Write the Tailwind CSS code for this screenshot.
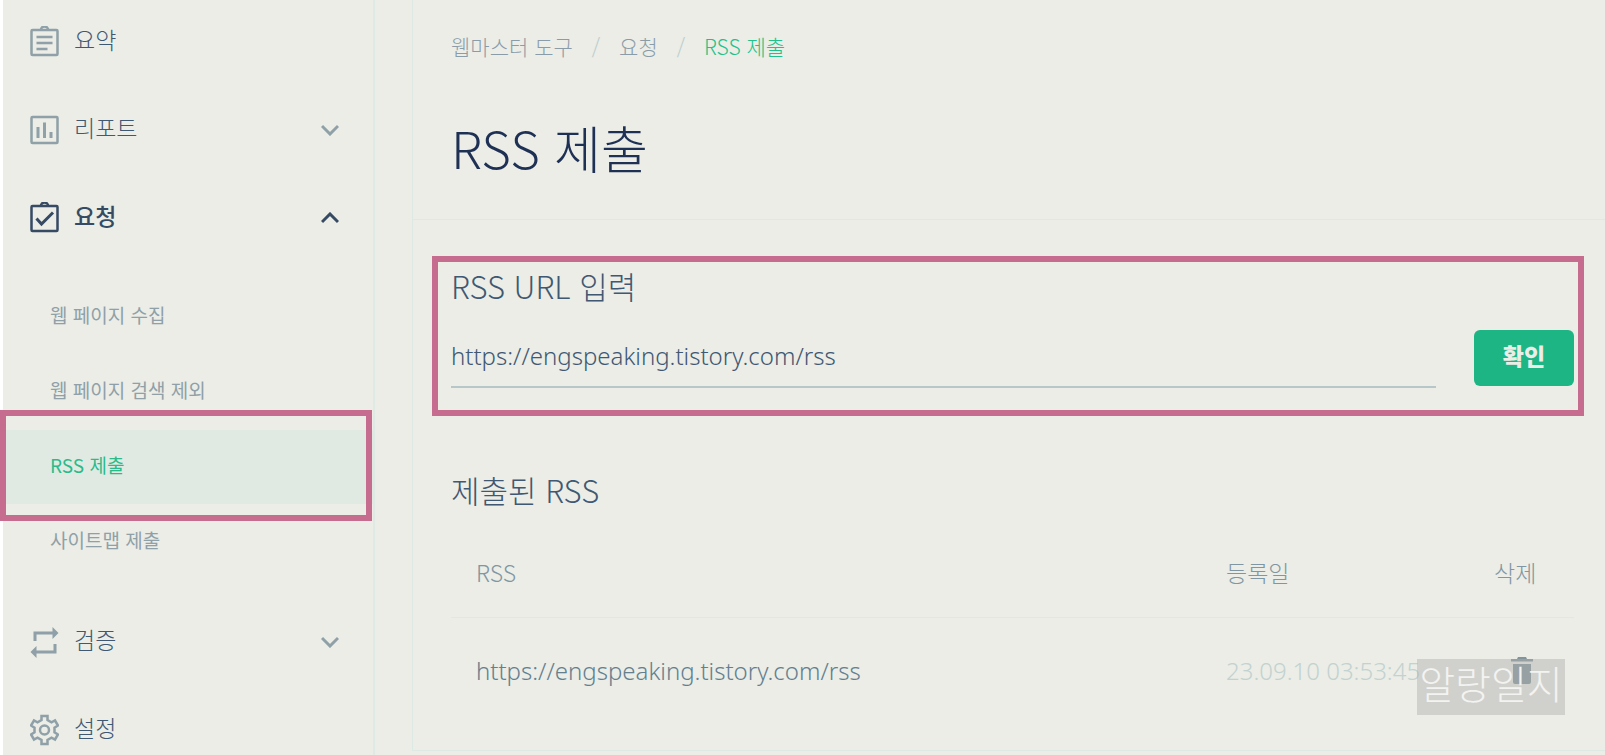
<!DOCTYPE html>
<html lang="ko">
<head>
    <meta charset="UTF-8">
    <meta name="viewport" content="width=device-width, initial-scale=1.0">
    <title>RSS 제출 - 웹마스터 도구</title>
    <script src="https://cdn.jsdelivr.net/npm/@tailwindcss/browser@4"></script>
</head>
<body class="bg-[#ebede6] font-['Noto_Sans_CJK_KR',sans-serif] font-light text-[#3f5873] overflow-hidden">

    <div class="flex min-h-screen border-l-3 border-white">

        <!-- Sidebar -->
        <aside class="w-[372px] shrink-0 border-r-2 border-[#e0eae4]">
            <nav class="-mt-[2px] text-[23px]">
                <a href="#" class="flex items-center h-[88px] pl-[27px] pr-[34px] gap-[15px]">
                    <svg class="w-[29px] h-8 text-[#8fa0a8]" viewBox="0 0 29 32" fill="none" stroke="currentColor" stroke-width="2.5">
                        <rect x="1.500" y="4" width="26" height="25" rx="1"/>
                        <path d="M11 3.500a3.500 3 0 0 1 7 0M6.500 11h16M6.500 17h16M6.500 23h11"/>
                    </svg>
                    <span class="pb-1.5">요약</span>
                </a>
                <a href="#" class="flex items-center h-[88px] pl-[27px] pr-[34px] gap-[15px]">
                    <svg class="w-[29px] h-8 text-[#8fa0a8]" viewBox="0 0 29 32" fill="none" stroke="currentColor" stroke-width="2.5">
                        <rect x="1.500" y="3" width="26" height="26" rx="1"/>
                        <path d="M8 13v11M14.500 8.500V24M21 18v6" stroke-width="3"/>
                    </svg>
                    <span class="pb-1.5">리포트</span>
                    <svg class="w-[18px] h-3 ml-auto text-[#8fa0a8]" viewBox="0 0 18 12" fill="none" stroke="currentColor" stroke-width="3"><path d="M1 2l8 8 8-8"/></svg>
                </a>
                <a href="#" class="flex items-center h-[88px] pl-[27px] pr-[34px] gap-[15px] font-medium text-[#364a64]">
                    <svg class="w-[29px] h-8" viewBox="0 0 29 32" fill="none" stroke="currentColor" stroke-width="2.5">
                        <rect x="1.500" y="4" width="26" height="25" rx="1"/>
                        <path d="M11 3.500a3.500 3 0 0 1 7 0"/>
                        <path d="M6.500 16.500l5 5.500L23 10.500" stroke-width="3"/>
                    </svg>
                    <span class="pb-1.5">요청</span>
                    <svg class="w-[18px] h-3 ml-auto" viewBox="0 0 18 12" fill="none" stroke="currentColor" stroke-width="3"><path d="M1 10l8-8 8 8"/></svg>
                </a>

                <!-- Submenu -->
                <ul class="flex flex-col gap-px pt-[18px] pb-[19px] text-[19px] font-normal text-[#8fa0a8]">
                    <li><a href="#" class="flex items-center h-[74px] pl-[47px] pb-[3px]">웹 페이지 수집</a></li>
                    <li><a href="#" class="flex items-center h-[74px] pl-[47px] pb-[3px]">웹 페이지 검색 제외</a></li>
                    <li class="relative">
                        <a href="#" class="flex items-center h-[74px] pl-[47px] pb-[3px] bg-[#e1eae2] text-[#2bbb8a]">RSS 제출</a>
                        <!-- highlight -->
                        <div class="absolute -top-5 -bottom-[17px] -left-[3px] right-px border-6 border-[#c56c8f] pointer-events-none"></div>
                    </li>
                    <li><a href="#" class="flex items-center h-[74px] pl-[47px] pb-[3px]">사이트맵 제출</a></li>
                </ul>

                <a href="#" class="flex items-center h-[88px] pl-[27px] pr-[34px] gap-[15px]">
                    <svg class="w-[29px] h-8 text-[#8fa0a8]" viewBox="0 0 29 32" fill="none" stroke="currentColor" stroke-width="3">
                        <path d="M5 15V7H23M25 18v8H6"/>
                        <path d="M22.500 1l6 6-6 6zM6.500 20l-6 6 6 6z" fill="currentColor" stroke="none"/>
                    </svg>
                    <span class="pb-1.5">검증</span>
                    <svg class="w-[18px] h-3 ml-auto text-[#8fa0a8]" viewBox="0 0 18 12" fill="none" stroke="currentColor" stroke-width="3"><path d="M1 2l8 8 8-8"/></svg>
                </a>
                <a href="#" class="flex items-center h-[88px] pl-[27px] pr-[34px] gap-[15px]">
                    <svg class="w-[29px] h-8 text-[#8fa0a8]" viewBox="0 0 29 32" fill="none" stroke="currentColor" stroke-width="2.5">
                        <path d="M11.500 2h6v4l4 2.300L25 6.500l3 5-3.500 2.200v4.600L28 20.500l-3 5-3.500-1.800-4 2.300v4h-6v-4l-4-2.300L4 25.500l-3-5 3.500-2.200v-4.600L1 11.500l3-5 3.500 1.800 4-2.300z"/>
                        <circle cx="14.500" cy="16" r="4.500"/>
                    </svg>
                    <span class="pb-1.5">설정</span>
                </a>
            </nav>
        </aside>

        <!-- Content -->
        <main class="flex-1 ml-[37px] self-start border-l border-b border-[#dde9e3]">
            <header class="pt-[30px] pb-[42px] pl-[38px] border-b border-[#dde9e3]">
                <nav aria-label="breadcrumb" class="flex gap-[19px] text-[21px] leading-8 text-[#8b9ca9]">
                    <a href="#">웹마스터 도구</a>
                    <span class="text-[#b9cccd]">/</span>
                    <a href="#">요청</a>
                    <span class="text-[#b9cccd]">/</span>
                    <a href="#" class="text-[#20c28b]">RSS 제출</a>
                </nav>
                <h1 class="mt-[55px] text-[51px] leading-[60px] text-[#1f3055]">RSS 제출</h1>
            </header>

            <div class="pt-[46px] pb-[26px] pl-[38px] pr-[31px]">
                <form class="relative" onsubmit="return false">
                    <label for="rss-url" class="block text-[31px] leading-10">RSS URL 입력</label>
                    <div class="flex mt-6 gap-[38px]">
                        <input id="rss-url" type="text" value="https://engspeaking.tistory.com/rss" class="flex-1 min-w-0 h-[58px] pb-1.5 font-['Noto_Sans','Noto_Sans_CJK_KR',sans-serif] text-[24px] border-b-2 border-[#b7c6c9] outline-none">
                        <button type="submit" class="w-[100px] h-14 pb-1.5 rounded-md bg-[#1db584] text-[23px] font-black text-[#ebede6]">확인</button>
                    </div>
                    <!-- highlight -->
                    <div class="absolute -top-[10px] -bottom-7 -left-[19px] -right-[10px] border-6 border-[#c56c8f] pointer-events-none"></div>
                </form>

                <h2 class="mt-[82px] text-[31px] leading-10">제출된 RSS</h2>
                <div class="relative mt-[18px]">
                    <table class="w-full text-[23px] text-left">
                        <thead>
                            <tr class="h-[89px] border-b border-[#dde9e3] text-[#8096a3]">
                                <th class="pl-[25px] font-light">RSS</th>
                                <th class="w-[268px] font-light">등록일</th>
                                <th class="w-[80px] font-light">삭제</th>
                            </tr>
                        </thead>
                        <tbody>
                            <tr class="h-[107px] font-['Noto_Sans','Noto_Sans_CJK_KR',sans-serif] text-[24px]">
                                <td class="pl-[25px] text-[#647f90]">https://engspeaking.tistory.com/rss</td>
                                <td class="text-[#c2d2d0]">23.09.10 03:53:45</td>
                                <td class="pl-4">
                                    <button type="button" aria-label="삭제" class="block text-[#83959c]">
                                        <svg class="w-6 h-7" viewBox="0 0 24 28" fill="currentColor"><path d="M1 2h6l1-2h8l1 2h6v2.500H1zM3 7h18v18a2 2 0 0 1-2 2H5a2 2 0 0 1-2-2z"/></svg>
                                    </button>
                                </td>
                            </tr>
                        </tbody>
                    </table>
                    <!-- watermark -->
                    <div class="absolute right-[9px] bottom-[9px] w-[148px] h-14 bg-[#b0b0b0]/45 text-center text-[39px] leading-[46px] font-light text-[#f3f3f1] whitespace-nowrap">알랑일지</div>
                </div>
            </div>
        </main>
    </div>

</body>
</html>
